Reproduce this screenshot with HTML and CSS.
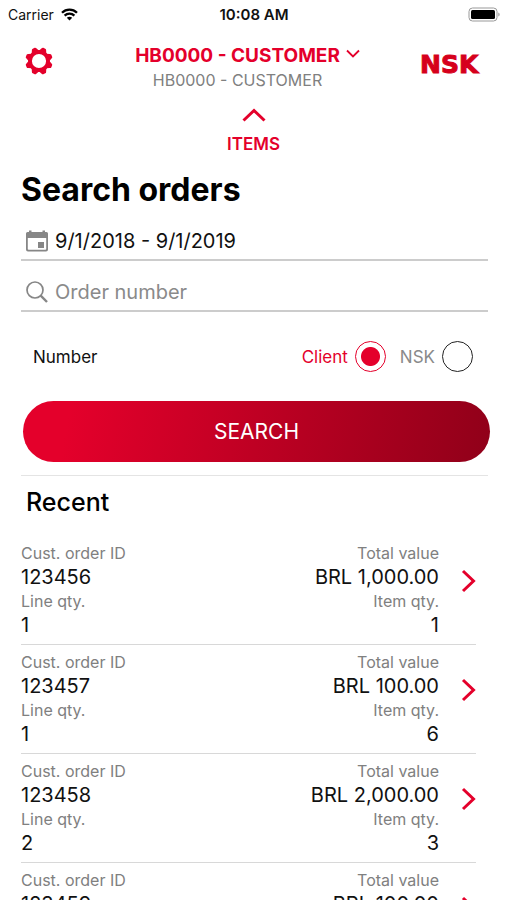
FILE: index.html
```html
<!DOCTYPE html>
<html lang="en">
<head>
<meta charset="utf-8">
<meta name="viewport" content="width=device-width, initial-scale=1">
<title>Search orders</title>
<link rel="stylesheet" href="styles.css">
</head>
<body>
<div class="screen">
	<div class="status">
		<div class="carrier">
			<span>Carrier</span>
			<svg width="17" height="13" viewBox="0 0 17 13" fill="none" stroke="#000" stroke-width="2.3">
				<path d="M1 4.800C5.200.6 11.800.6 16 4.800M3.600 7.600c2.800-2.700 7-2.700 9.800 0"/>
				<path d="M8.500 12.500l-2.700-2.800c1.500-1.400 3.900-1.400 5.400 0z" fill="#000" stroke="none"/>
			</svg>
		</div>
		<span class="time">10:08 AM</span>
		<svg class="battery" width="32" height="15" viewBox="0 0 32 15">
			<rect x="1" y="1" width="28" height="13" rx="3.500" fill="#fff" stroke="#999"/>
			<rect x="3" y="3" width="24" height="9" rx="1.500"/>
			<path d="M30.500 5.500c1.300.5 1.300 3.500 0 4z" fill="#777"/>
		</svg>
	</div>

	<header class="header">
		<button class="icon-btn" type="button" aria-label="Settings">
			<svg width="28" height="28" viewBox="-14 -14 28 28" fill="#e4002b">
				<g transform="rotate(22.5)">
					<path id="tooth" d="M-4.200-9L-2.400-12.800Q-2-13.800-1-13.800H1Q2-13.800 2.400-12.800L4.200-9z"/>
					<use href="#tooth" transform="rotate(45)"/>
					<use href="#tooth" transform="rotate(90)"/>
					<use href="#tooth" transform="rotate(135)"/>
					<use href="#tooth" transform="rotate(180)"/>
					<use href="#tooth" transform="rotate(225)"/>
					<use href="#tooth" transform="rotate(270)"/>
					<use href="#tooth" transform="rotate(315)"/>
				</g>
				<circle r="9" fill="none" stroke="#e4002b" stroke-width="3.800"/>
			</svg>
		</button>
		<div class="account">
			<button class="account-name" type="button">
				HB0000 - CUSTOMER
				<svg width="14" height="9" viewBox="0 0 14 9" fill="none" stroke="#e4002b" stroke-width="1.800"><path d="M1 1.500l6 6 6-6"/></svg>
			</button>
			<div class="account-sub">HB0000 - CUSTOMER</div>
		</div>
		<div class="logo">NSK</div>
	</header>

	<button class="items" type="button">
		<svg width="24" height="14" viewBox="0 0 24 14" fill="none" stroke="#e4002b" stroke-width="3"><path d="M1.500 12.500L12 2.500l10.500 10"/></svg>
		ITEMS
	</button>

	<main class="content">
		<h1>Search orders</h1>
		<form class="search">
			<div class="field">
				<svg width="22" height="22" viewBox="0 0 22 22" fill="#868686">
					<path d="M3 2V.5h2.500V2h11V.5H19V2h1.500Q22 2 22 3.500v16q0 2-2 2H2q-2 0-2-2v-16Q0 2 1.500 2zM1.800 8v11q0 .8.800.8h16.800q.8 0 .8-.8V8z" fill-rule="evenodd"/>
					<rect x="12" y="12" width="6" height="6"/>
				</svg>
				<input type="text" name="period" value="9/1/2018 - 9/1/2019" aria-label="Period">
			</div>
			<div class="field">
				<svg width="22" height="22" viewBox="0 0 22 22" fill="none" stroke="#868686">
					<circle cx="9" cy="9" r="8" stroke-width="1.700"/>
					<path d="M14.700 14.700l6.300 6.300" stroke-width="2.400"/>
				</svg>
				<input type="text" name="order" placeholder="Order number" aria-label="Order number">
			</div>
			<div class="number">
				<span>Number</span>
				<div class="options">
					<label class="option"><span>Client</span><input type="radio" name="kind" value="client" checked></label>
					<label class="option"><span>NSK</span><input type="radio" name="kind" value="nsk"></label>
				</div>
			</div>
			<button class="submit" type="button">SEARCH</button>
		</form>

		<section class="recent">
			<h2>Recent</h2>
			<ul class="orders">
				<li class="order">
					<dl><dt>Cust. order ID</dt><dd>123456</dd><dt>Line qty.</dt><dd>1</dd></dl>
					<dl class="right"><dt>Total value</dt><dd>BRL 1,000.00</dd><dt>Item qty.</dt><dd>1</dd></dl>
					<a class="open" href="#123456" aria-label="Open order 123456"><svg width="15" height="24" viewBox="0 0 15 24"><path d="M2 2l10.500 10L2 22"/></svg></a>
				</li>
				<li class="order">
					<dl><dt>Cust. order ID</dt><dd>123457</dd><dt>Line qty.</dt><dd>1</dd></dl>
					<dl class="right"><dt>Total value</dt><dd>BRL 100.00</dd><dt>Item qty.</dt><dd>6</dd></dl>
					<a class="open" href="#123457" aria-label="Open order 123457"><svg width="15" height="24" viewBox="0 0 15 24"><path d="M2 2l10.500 10L2 22"/></svg></a>
				</li>
				<li class="order">
					<dl><dt>Cust. order ID</dt><dd>123458</dd><dt>Line qty.</dt><dd>2</dd></dl>
					<dl class="right"><dt>Total value</dt><dd>BRL 2,000.00</dd><dt>Item qty.</dt><dd>3</dd></dl>
					<a class="open" href="#123458" aria-label="Open order 123458"><svg width="15" height="24" viewBox="0 0 15 24"><path d="M2 2l10.500 10L2 22"/></svg></a>
				</li>
				<li class="order">
					<dl><dt>Cust. order ID</dt><dd>123459</dd></dl>
					<dl class="right"><dt>Total value</dt><dd>BRL 100.00</dd></dl>
					<a class="open" href="#123459" aria-label="Open order 123459"><svg width="15" height="24" viewBox="0 0 15 24"><path d="M2 2l10.500 10L2 22"/></svg></a>
				</li>
			</ul>
		</section>
	</main>
</div>
</body>
</html>
```
FILE: styles.css
```css
* {
	box-sizing: border-box;
	margin: 0;
	padding: 0;
}

body {
	background: #fff;
	color: #111;
	font-family: Inter, "Liberation Sans", sans-serif;
	font-size: 16px;
}

button, input {
	font: inherit;
	color: inherit;
	border: none;
	background: none;
}

svg {
	display: block;
	flex: none;
}

/* the order list runs on below the fold */
.screen {
	height: 100vh;
	overflow: hidden;
}

.status {
	display: grid;
	grid-template-columns: 1fr auto 1fr;
	align-items: center;
	height: 28px;
	padding: 0 7px 0 8px;
	font-size: 14px;
}

.carrier {
	display: flex;
	align-items: center;
	gap: 7px;
}

.time {
	font-size: 15px;
	font-weight: 600;
}

.battery {
	justify-self: end;
}

.header {
	display: grid;
	grid-template-columns: 62px 1fr 62px;
	align-items: center;
	padding: 15px 25px 0;
}

.icon-btn {
	justify-self: start;
	height: 40px;
	padding-bottom: 12px;
}

.account {
	display: flex;
	flex-direction: column;
	align-items: center;
	color: #808080;
	font-size: 16px;
	line-height: 22px;
}

.account-name {
	display: flex;
	align-items: center;
	gap: 6px;
	padding-right: 12px;
	color: #e4002b;
	font-size: 19px;
	font-weight: 700;
	line-height: 26px;
	white-space: nowrap;
}

.account-name svg {
	margin-bottom: 5px;
}

.account-sub {
	padding-right: 32px;
}

.logo {
	color: #d6001c;
	font-family: "DejaVu Sans", sans-serif;
	font-size: 25px;
	font-weight: bold;
	line-height: 28px;
	padding-bottom: 4px;
	-webkit-text-stroke: 1px #d6001c;
}

.items {
	display: flex;
	flex-direction: column;
	align-items: center;
	gap: 12px;
	margin: 17px auto 0;
	color: #e4002b;
	font-size: 17px;
	font-weight: 600;
	line-height: 20px;
}

.content {
	padding: 16px 19px 0 21px;
}

h1 {
	color: #000;
	font-size: 32px;
	font-weight: 700;
	line-height: 40px;
}

.field {
	display: flex;
	align-items: center;
	gap: 7px;
	height: 51px;
	padding-left: 5px;
	padding-top: 13px;
	border-bottom: 2px solid #ccc;
}

.field input {
	flex: 1;
	min-width: 0;
	font-size: 20px;
	line-height: 28px;
	outline: none;
}

.field input::placeholder {
	color: #8a8a8a;
	opacity: 1;
}

.number {
	display: flex;
	align-items: center;
	justify-content: space-between;
	height: 89px;
	padding: 0 15px 0 12px;
	font-size: 17px;
}

.options, .option {
	display: flex;
	align-items: center;
}

.options {
	gap: 14px;
}

.option {
	gap: 7px;
	color: #8a8a8a;
}

.option:has(:checked) {
	color: #e4002b;
}

.option input {
	appearance: none;
	width: 31px;
	height: 31px;
	border: 1px solid #222;
	border-radius: 50%;
}

.option input:checked {
	border-color: #e4002b;
	background: radial-gradient(circle, #e4002b 9px, transparent 10px);
}

.submit {
	display: block;
	width: 100%;
	height: 61px;
	margin-left: 2px;
	border-radius: 31px;
	background: linear-gradient(100deg, #e4002b 10%, #900019 100%);
	color: #fff;
	font-size: 21px;
}

.recent {
	margin-top: 13px;
	border-top: 1px solid #e4e4e4;
}

h2 {
	padding: 10px 5px;
	color: #000;
	font-size: 25px;
	font-weight: 500;
	line-height: 32px;
}

.orders {
	margin-top: 8px;
	padding-right: 12px;
	list-style: none;
}

.order {
	display: flex;
	align-items: flex-start;
	padding: 5px 0 7px;
	border-bottom: 1px solid #d8d8d8;
}

.order dl {
	flex: 1;
	line-height: 24px;
}

.order dt {
	color: #808080;
}

.order dd {
	font-size: 20px;
}

.right {
	text-align: right;
}

.open {
	padding: 28px 0 0 22px;
}

.open path {
	fill: none;
	stroke: #e4002b;
	stroke-width: 3;
}
```
